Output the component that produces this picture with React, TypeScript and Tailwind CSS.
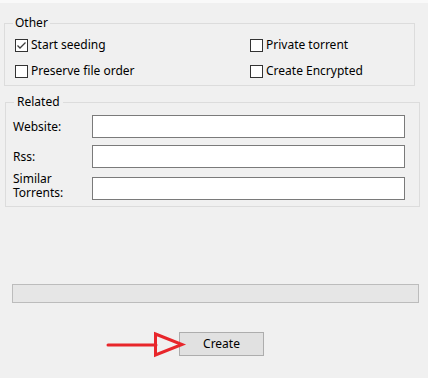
import React from 'react';

const font = { fontFamily: '"Segoe UI", "Noto Sans", "Open Sans", sans-serif' };

function Check({ checked, label }: { checked?: boolean; label: string }) {
    return (
        <label className="flex h-[26px] items-center gap-[3px]">
            <span className="flex h-[13px] w-[13px] items-center justify-center border border-[#333333] bg-white">
                {checked && (
                    <svg width="11" height="11" viewBox="0 0 11 11">
                        <path d="M1.5 5.5 L4 8 L9.5 2.5" fill="none" stroke="#3d3d3d" strokeWidth="1.3" />
                    </svg>
                )}
            </span>
            <span>{label}</span>
        </label>
    );
}

function Field({ label, two }: { label: string; two?: boolean }) {
    return (
        <div className={two ? 'mt-[4px] flex items-end' : 'flex items-center'}>
            <span className={two ? 'w-[79px] whitespace-pre-line leading-[14px]' : 'w-[79px]'}>{label}</span>
            <input className="h-[23px] w-[313px] border border-[#7a7a7a] bg-white outline-none" />
        </div>
    );
}

export default function App() {
    return (
        <div className="relative h-[378px] w-[428px] bg-[#f0f0f0] text-[12px] text-black" style={font}>
            <div className="h-[3px] bg-[#f9f9f9]" />

            <fieldset className="ml-[4px] mt-[12px] w-[411px] border border-[#dcdcdc] pb-[1px] pl-[10px]">
                <legend className="ml-[-2px] px-[2px] leading-[16px]">Other</legend>
                <div className="grid grid-cols-[235px_1fr] pt-[1px]">
                    <Check checked label="Start seeding" />
                    <Check label="Private torrent" />
                    <Check label="Preserve file order" />
                    <Check label="Create Encrypted" />
                </div>
            </fieldset>

            <fieldset className="ml-[5px] mt-[8px] w-[415px] border border-[#dcdcdc] pb-[6px] pl-[7px]">
                <legend className="ml-[1px] px-[3px] leading-[16px]">Related</legend>
                <div className="mt-[5px] flex flex-col">
                    <Field label="Website:" />
                    <div className="mt-[7px]">
                        <Field label="Rss:" />
                    </div>
                    <Field label={'Similar\nTorrents:'} two />
                </div>
            </fieldset>

            <div className="ml-[12px] mt-[77px] h-[19px] w-[407px] border border-[#bcbcbc] bg-[#e6e6e6]" />

            <div className="mt-[29px] flex">
                <button className="ml-[179px] h-[24px] w-[85px] border border-[#adadad] bg-[#e1e1e1]">Create</button>
            </div>

            <svg className="absolute left-[100px] top-[328px]" width="90" height="32" viewBox="100 328 90 32">
                <line x1="108" y1="345" x2="156" y2="345" stroke="#e8262b" strokeWidth="3" strokeLinecap="round" />
                <polygon points="155.5,334 182,344.5 155.5,355" fill="none" stroke="#e8262b" strokeWidth="3" strokeLinejoin="miter" />
            </svg>
        </div>
    );
}
